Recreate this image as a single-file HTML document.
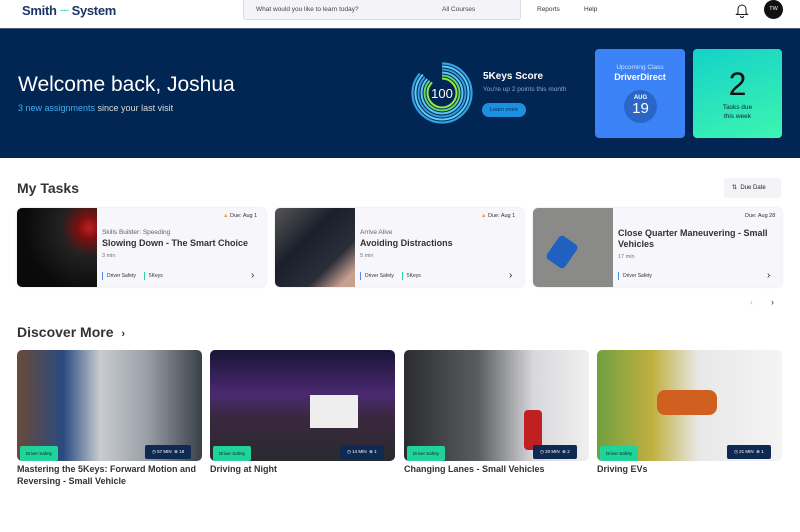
<!DOCTYPE html>
<html><head><meta charset="utf-8"><style>
*{box-sizing:border-box;margin:0;padding:0}
body{width:800px;height:532px;overflow:hidden;background:#fff;font-family:"Liberation Sans",sans-serif;color:#222;position:relative}
.a{position:absolute}
.nav{left:0;top:0;width:800px;height:29px;background:#fff;border-bottom:1px solid #4a5a7a}
.banner{left:0;top:29px;width:800px;height:129px;background:#012654}
.card{background:#f6f6fb;border-radius:5px;box-shadow:0 0 2px rgba(0,0,0,.15);overflow:hidden}
.tag{display:inline-block;font-size:5px;line-height:8px;padding:0 4px;border-left:1.5px solid #4a8cf0;margin-right:4px;color:#333;vertical-align:top}
.tag.g{border-color:#2dd4a8}
.img{border-radius:5px;overflow:hidden}
.pill{font-size:4.5px;color:#123;background:#1fd39a;padding:5px 6px;border-radius:2px}
.meta{background:#0e2a52;color:#fff;font-size:4.5px;height:14px;line-height:14px;padding:0 7px;border-radius:2px}
.t{font-weight:bold;color:#333}
</style></head><body>
<div class="a nav"></div>
<div class="a" style="left:22px;top:3px;font-size:13px;font-weight:bold;color:#1d3566;letter-spacing:-.3px">Smith <span style="color:#2dd4a8;font-size:8px;letter-spacing:-1px;vertical-align:2px">·····</span> System</div>
<div class="a" style="left:243px;top:-2px;width:278px;height:22px;background:#f4f4f8;border:1px solid #ddd;border-radius:3px"></div>
<div class="a" style="left:256px;top:6px;font-size:6.5px;color:#444">What would you like to learn today?</div>
<div class="a" style="left:442px;top:6px;font-size:6.5px;color:#444">All Courses</div>
<div class="a" style="left:537px;top:6px;font-size:6.5px;color:#333">Reports</div>
<div class="a" style="left:584px;top:6px;font-size:6.5px;color:#333">Help</div>
<svg class="a" style="left:735px;top:2px" width="14" height="16" viewBox="0 0 14 16"><path d="M3 11V7a4 4 0 0 1 8 0v4l1.5 1.5h-11z" fill="none" stroke="#222" stroke-width="1"/><path d="M5.5 14a1.5 1.5 0 0 0 3 0" fill="none" stroke="#222"/></svg>
<div class="a" style="left:764px;top:0;width:19px;height:19px;border-radius:50%;background:#111"></div>
<div class="a" style="left:764px;top:6px;width:19px;text-align:center;color:#fff;font-size:5.5px;line-height:7px">TW</div>

<div class="a banner"></div>
<div class="a" style="left:18px;top:73px;font-size:21px;color:#fff">Welcome back, Joshua</div>
<div class="a" style="left:18px;top:103px;font-size:9px;color:#ddd"><span style="color:#3fb0f0">3 new assignments</span> since your last visit</div>
<svg class="a" style="left:410px;top:61px" width="64" height="64" viewBox="0 0 64 64">
<g fill="none" stroke-linecap="butt" transform="rotate(-90 32 32)">
<circle cx="32" cy="32" r="29.5" stroke="#36a0e8" stroke-width="2.2" stroke-dasharray="160 200"/>
<circle cx="32" cy="32" r="26.5" stroke="#5cd0f0" stroke-width="2" stroke-dasharray="145 200"/>
<circle cx="32" cy="32" r="23.5" stroke="#3a9ae0" stroke-width="2" stroke-dasharray="128 200"/>
<circle cx="32" cy="32" r="20.5" stroke="#5cc8f0" stroke-width="2" stroke-dasharray="112 200"/>
<circle cx="32" cy="32" r="17.5" stroke="#5fd870" stroke-width="2" stroke-dasharray="96 200"/>
<circle cx="32" cy="32" r="14.5" stroke="#9be640" stroke-width="2" stroke-dasharray="80 200"/>
</g>
<text x="32" y="37" text-anchor="middle" font-size="13" fill="#fff" font-family="Liberation Sans">100</text></svg>
<div class="a" style="left:483px;top:71px;font-size:10px;font-weight:bold;color:#fff">5Keys Score</div>
<div class="a" style="left:483px;top:86px;font-size:6.5px;color:#8ea5c8">You're up 2 points this month</div>
<div class="a" style="left:482px;top:103px;width:44px;height:14px;border-radius:7px;background:#1d8fe0;color:#0b2a55;font-size:5.5px;text-align:center;line-height:14px">Learn more</div>
<div class="a" style="left:595px;top:49px;width:90px;height:89px;border-radius:4px;background:#3b82f6"></div>
<div class="a" style="left:595px;top:64px;width:90px;text-align:center;font-size:6.5px;color:#cfe0ff">Upcoming Class</div>
<div class="a" style="left:595px;top:72px;width:90px;text-align:center;font-size:9px;font-weight:bold;color:#fff">DriverDirect</div>
<div class="a" style="left:624px;top:90px;width:33px;height:33px;border-radius:50%;background:#2a66c8;color:#fff;text-align:center"><div style="font-size:6px;margin-top:5px;font-weight:bold">AUG</div><div style="font-size:15px;line-height:15px">19</div></div>
<div class="a" style="left:693px;top:49px;width:89px;height:89px;border-radius:4px;background:linear-gradient(160deg,#14d2c8,#3ef5b0)"></div>
<div class="a" style="left:693px;top:66px;width:89px;text-align:center;font-size:32px;color:#111">2</div>
<div class="a" style="left:693px;top:103px;width:89px;text-align:center;font-size:6.5px;color:#123;line-height:9px">Tasks due<br>this week</div>

<div class="a t" style="left:17px;top:180px;font-size:14px">My Tasks</div>
<div class="a" style="left:724px;top:178px;width:57px;height:20px;background:#f4f4f8;border-radius:3px;font-size:6px;line-height:20px;padding-left:8px">⇅&nbsp;&nbsp;Due Date</div>

<div class="a card" style="left:17px;top:208px;width:249px;height:79px">
<div class="a" style="left:0;top:0;width:80px;height:79px;background:radial-gradient(circle at 90% 25%,#c02020 0,#7a1010 12%,#222 30%,#0a0a0a 70%)"></div>
<div class="a" style="left:206px;top:5px;font-size:5.5px;color:#333"><span style="color:#f0a020">▲</span> Due: Aug 1</div>
<div class="a" style="left:85px;top:21px;font-size:6.5px;color:#666">Skills Builder: Speeding</div>
<div class="a t" style="left:85px;top:30px;font-size:9px">Slowing Down - The Smart Choice</div>
<div class="a" style="left:85px;top:45px;font-size:5.5px;color:#777">3 min</div>
<div class="a" style="left:85px;top:64px;height:8px;display:flex"><span class="tag">Driver Safety</span><span class="tag g">5Keys</span></div>
<div class="a" style="left:234px;top:62px;font-size:10px">›</div></div>

<div class="a card" style="left:275px;top:208px;width:249px;height:79px">
<div class="a" style="left:0;top:0;width:80px;height:79px;background:linear-gradient(135deg,#555 0,#1a1f2a 40%,#2a2e38 70%,#c8a090 90%)"></div>
<div class="a" style="left:206px;top:5px;font-size:5.5px;color:#333"><span style="color:#f0a020">▲</span> Due: Aug 1</div>
<div class="a" style="left:85px;top:21px;font-size:6.5px;color:#666">Arrive Alive</div>
<div class="a t" style="left:85px;top:30px;font-size:9px">Avoiding Distractions</div>
<div class="a" style="left:85px;top:45px;font-size:5.5px;color:#777">5 min</div>
<div class="a" style="left:85px;top:64px;height:8px;display:flex"><span class="tag">Driver Safety</span><span class="tag g">5Keys</span></div>
<div class="a" style="left:234px;top:62px;font-size:10px">›</div></div>

<div class="a card" style="left:533px;top:208px;width:249px;height:79px">
<div class="a" style="left:0;top:0;width:80px;height:79px;background:#8a8a88"><div class="a" style="left:18px;top:30px;width:22px;height:28px;background:#1f60c0;border-radius:4px;transform:rotate(35deg)"></div></div>
<div class="a" style="left:212px;top:5px;font-size:5.5px;color:#333">Due: Aug 28</div>
<div class="a t" style="left:85px;top:20px;font-size:9px;line-height:11px">Close Quarter Maneuvering - Small<br>Vehicles</div>
<div class="a" style="left:85px;top:46px;font-size:5.5px;color:#777">17 min</div>
<div class="a" style="left:85px;top:64px;height:8px;display:flex"><span class="tag">Driver Safety</span></div>
<div class="a" style="left:234px;top:62px;font-size:10px">›</div></div>

<div class="a" style="left:750px;top:297px;font-size:9px;color:#bbb">‹</div>
<div class="a" style="left:771px;top:297px;font-size:9px;color:#333">›</div>

<div class="a t" style="left:17px;top:324px;font-size:14px">Discover More <span style="font-size:11px;margin-left:4px">›</span></div>

<div class="a img" style="left:17px;top:350px;width:185px;height:111px;background:linear-gradient(90deg,#6a4a38 0,#2a4a80 25%,#c8ccd0 45%,#9aa0a8 70%,#3a4048 100%)"></div>
<div class="a img" style="left:210px;top:350px;width:185px;height:111px;background:linear-gradient(180deg,#1a1438 0,#4a2a70 40%,#3a2840 60%,#2a2a2e 100%)"><div class="a" style="left:100px;top:45px;width:48px;height:33px;background:#eee"></div></div>
<div class="a img" style="left:404px;top:350px;width:185px;height:111px;background:linear-gradient(90deg,#2a2c30 0,#5a5c60 40%,#d8d8dc 70%,#f0f0f0 100%)"><div class="a" style="left:120px;top:60px;width:18px;height:40px;background:#c02020;border-radius:4px"></div></div>
<div class="a img" style="left:597px;top:350px;width:185px;height:111px;background:linear-gradient(90deg,#70a040 0,#c0b040 30%,#e8e8e8 55%,#f4f4f4 100%)"><div class="a" style="left:60px;top:40px;width:60px;height:25px;background:#d06020;border-radius:8px"></div></div>

<div class="a pill" style="left:20px;top:446px">Driver Safety</div>
<div class="a pill" style="left:213px;top:446px">Driver Safety</div>
<div class="a pill" style="left:407px;top:446px">Driver Safety</div>
<div class="a pill" style="left:600px;top:446px">Driver Safety</div>
<div class="a meta" style="left:145px;top:445px">◷ 57 MIN &nbsp;⊕ 18</div>
<div class="a meta" style="left:340px;top:445px">◷ 14 MIN &nbsp;⊕ 1</div>
<div class="a meta" style="left:533px;top:445px">◷ 20 MIN &nbsp;⊕ 2</div>
<div class="a meta" style="left:727px;top:445px">◷ 21 MIN &nbsp;⊕ 1</div>

<div class="a t" style="left:17px;top:464px;font-size:9px;line-height:11.5px">Mastering the 5Keys: Forward Motion and<br>Reversing - Small Vehicle</div>
<div class="a t" style="left:210px;top:464px;font-size:9px">Driving at Night</div>
<div class="a t" style="left:404px;top:464px;font-size:9px">Changing Lanes - Small Vehicles</div>
<div class="a t" style="left:597px;top:464px;font-size:9px">Driving EVs</div>
</body></html>
